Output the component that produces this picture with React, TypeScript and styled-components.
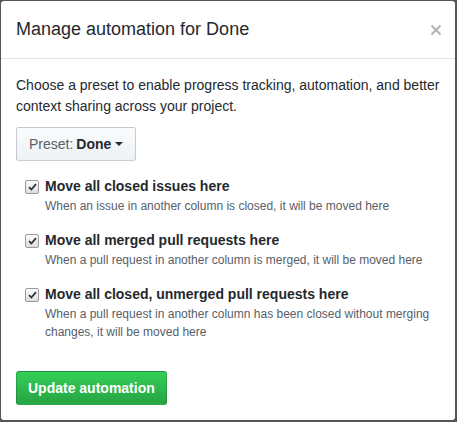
import React from "react";
import styled, { createGlobalStyle } from "styled-components";

const Global = createGlobalStyle`
  html, body { margin: 0; padding: 0; }
  body {
    background: #555;
    font-family: "Liberation Sans", Arial, Helvetica, sans-serif;
    font-size: 14px;
    line-height: 1.5;
    color: #24292e;
  }
`;

const Frame = styled.div`
  padding: 1px 2px 1px 1px;
  width: 457px;
  height: 422px;
  box-sizing: border-box;
`;

const Dialog = styled.div`
  background: #fff;
  border-radius: 3px;
  height: 419px;
  display: flex;
  flex-direction: column;
`;

const Header = styled.div`
  display: flex;
  align-items: center;
  justify-content: space-between;
  padding: 16px 16px 16px 15px;
  border-bottom: 1px solid #e1e4e8;
`;

const Title = styled.h1`
  margin: 0;
  font-size: 18px;
  font-weight: 400;
  line-height: 25px;
  color: #24292e;
`;

const Close = styled.button`
  border: 0;
  background: none;
  padding: 0;
  margin-right: -3px;
  display: flex;
  cursor: pointer;
`;

const Body = styled.div`
  padding: 16px 12px 16px 15px;
`;

const Intro = styled.p`
  margin: 0 0 10px;
`;

const SelectButton = styled.button`
  font-family: inherit;
  font-size: 14px;
  line-height: 20px;
  padding: 6px 12px;
  color: #24292e;
  background: linear-gradient(-180deg, #fafbfc 0%, #eff3f6 90%);
  border: 1px solid rgba(27, 31, 35, 0.2);
  border-radius: 3px;
  display: inline-flex;
  align-items: center;
  gap: 3px;
`;

const Muted = styled.span`
  color: #586069;
`;

const Strong = styled.span`
  font-weight: 700;
`;

const Caret = styled.span`
  display: inline-block;
  width: 0;
  height: 0;
  margin-left: 1px;
  border-top: 4px solid #24292e;
  border-left: 4px solid transparent;
  border-right: 4px solid transparent;
`;

const Options = styled.div`
  margin: 15px 0 30px 9px;
  display: flex;
  flex-direction: column;
  gap: 15px;
`;

const Option = styled.div`
  position: relative;
  padding-left: 20px;
`;

const Box = styled.span`
  position: absolute;
  left: 0;
  top: 4px;
  width: 12px;
  height: 12px;
  border: 1px solid #9a9a9a;
  border-radius: 2px;
  background: linear-gradient(#fcfcfc, #dedede);
  display: flex;
  align-items: center;
  justify-content: center;
`;

const Label = styled.div`
  font-weight: 700;
  line-height: 21px;
`;

const Note = styled.div`
  font-size: 12px;
  line-height: 18px;
  color: #586069;
`;

const Primary = styled.button`
  font-family: inherit;
  font-size: 14px;
  font-weight: 700;
  line-height: 20px;
  padding: 6px 11px;
  color: #fff;
  background: linear-gradient(-180deg, #34d058 0%, #28a745 90%);
  border: 1px solid rgba(27, 31, 35, 0.2);
  border-radius: 3px;
`;

const opts = [
  {
    label: "Move all closed issues here",
    note: "When an issue in another column is closed, it will be moved here",
  },
  {
    label: "Move all merged pull requests here",
    note: "When a pull request in another column is merged, it will be moved here",
  },
  {
    label: "Move all closed, unmerged pull requests here",
    note: "When a pull request in another column has been closed without merging changes, it will be moved here",
  },
];

export default function App() {
  return (
    <>
      <Global />
      <Frame>
        <Dialog>
          <Header>
            <Title>Manage automation for Done</Title>
            <Close aria-label="Close">
              <svg width="12" height="16" viewBox="0 0 12 16">
                <path
                  fill="#b4b4b4"
                  d="M7.48 8l3.75 3.75-1.48 1.48L6 9.48l-3.75 3.75-1.48-1.48L4.52 8 .77 4.25l1.48-1.48L6 6.52l3.75-3.75 1.48 1.48L7.48 8z"
                />
              </svg>
            </Close>
          </Header>
          <Body>
            <Intro>
              Choose a preset to enable progress tracking, automation, and better
              context sharing across your project.
            </Intro>
            <SelectButton>
              <Muted>Preset:</Muted>
              <Strong>Done</Strong>
              <Caret />
            </SelectButton>
            <Options>
              {opts.map((o) => (
                <Option key={o.label}>
                  <Box>
                    <svg width="9" height="8" viewBox="0 0 9 8">
                      <path
                        d="M1 4.2 L3.4 6.5 L8 1.2"
                        fill="none"
                        stroke="#333"
                        strokeWidth="1.8"
                      />
                    </svg>
                  </Box>
                  <Label>{o.label}</Label>
                  <Note>{o.note}</Note>
                </Option>
              ))}
            </Options>
            <Primary>Update automation</Primary>
          </Body>
        </Dialog>
      </Frame>
    </>
  );
}
